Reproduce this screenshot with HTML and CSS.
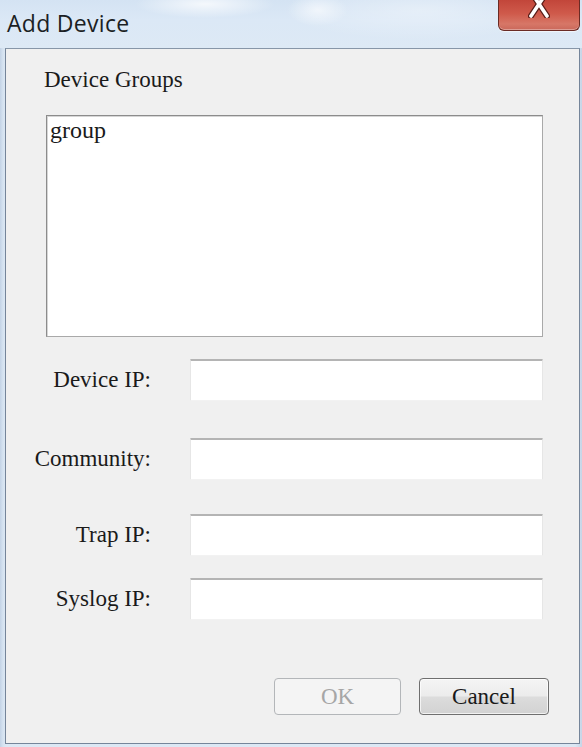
FILE: index.html
```html
<!DOCTYPE html>
<html lang="en">
<head>
<meta charset="utf-8">
<title>Add Device</title>
<link rel="stylesheet" href="styles.css">
</head>
<body>
<div class="window">
  <div class="titlebar">
    <span class="title">Add Device</span>
    <button class="close" type="button" aria-label="Close">
      <svg class="close-x" width="22" height="26" viewBox="0 0 22 26">
        <path d="M3 0 L19 24 M19 0 L3 24" stroke="#5a1d18" stroke-width="6" stroke-linecap="round" fill="none"/>
        <path d="M3 0 L19 24 M19 0 L3 24" stroke="#ffffff" stroke-width="3.6" stroke-linecap="round" fill="none"/>
      </svg>
    </button>
  </div>
  <div class="client">
    <div class="group-label">Device Groups</div>
    <div class="listbox">
      <div class="list-item">group</div>
    </div>
    <div class="row row-ip">
      <label class="field-label" for="ip">Device IP:</label>
      <input class="field" id="ip" type="text">
    </div>
    <div class="row row-community">
      <label class="field-label" for="community">Community:</label>
      <input class="field" id="community" type="text">
    </div>
    <div class="row row-trap">
      <label class="field-label" for="trap">Trap IP:</label>
      <input class="field" id="trap" type="text">
    </div>
    <div class="row row-syslog">
      <label class="field-label" for="syslog">Syslog IP:</label>
      <input class="field" id="syslog" type="text">
    </div>
    <div class="actions">
      <button class="btn btn-disabled" type="button" disabled>OK</button>
      <button class="btn" type="button">Cancel</button>
    </div>
  </div>
</div>
</body>
</html>
```

FILE: styles.css
```css
* {
  box-sizing: border-box;
}

html, body {
  margin: 0;
  padding: 0;
}

body {
  width: 582px;
  height: 747px;
  overflow: hidden;
  background: #d3e0ef;
}

.window {
  width: 582px;
  height: 747px;
  display: flex;
  flex-direction: column;
  background:
    linear-gradient(90deg, #c3d3e6 0, #d6e3f1 3px, #dce8f4 6px, #dce8f4 575px, #c6d5e7 582px);
}

/* glass caption */
.titlebar {
  height: 48px;
  flex: none;
  display: flex;
  align-items: flex-start;
  background:
    radial-gradient(ellipse 70px 14px at 205px 4px, rgba(255,255,255,0.75), rgba(255,255,255,0) 100%),
    radial-gradient(ellipse 30px 16px at 318px 10px, rgba(255,255,255,0.6), rgba(255,255,255,0) 100%),
    radial-gradient(ellipse 140px 30px at 420px 10px, rgba(255,255,255,0.35), rgba(255,255,255,0) 100%),
    linear-gradient(180deg, #d4e3f3 0, #dbe8f6 20px, #dde9f5 48px);
}

.title {
  margin: 8px 0 0 7px;
  font-family: "Open Sans", "Liberation Sans", sans-serif;
  font-size: 23px;
  line-height: 30px;
  color: #1b1f24;
  letter-spacing: 0.3px;
}

.close {
  margin: 0 2px 0 auto;
  width: 82px;
  height: 31px;
  padding: 0;
  position: relative;
  overflow: hidden;
  border: 1px solid #6a2b25;
  border-top: none;
  border-radius: 0 0 6px 6px;
  background: linear-gradient(180deg, #c2463a 0, #cf5a4b 45%, #d77767 80%, #c9685a 100%);
  box-shadow: inset 0 -1px 0 rgba(255,255,255,0.35), 0 1px 1px rgba(255,255,255,0.6);
}

.close-x {
  position: absolute;
  left: 29px;
  top: -8px;
}

/* dialog client area */
.client {
  flex: none;
  height: 696px;
  margin: 0 2px 0 5px;
  background: #f0f0f0;
  border: 1px solid #75859a;
  border-top-color: #8796a8;
  font-family: "Liberation Serif", "DejaVu Serif", serif;
  font-size: 23px;
  color: #1a1a1a;
  display: flex;
  flex-direction: column;
}

.group-label {
  margin: 18px 0 0 38px;
  line-height: 26px;
  height: 26px;
}

.listbox {
  margin: 22px 0 0 40px;
  width: 497px;
  height: 222px;
  background: #ffffff;
  border: 1px solid #a9a9a9;
  border-top-color: #8c8c8c;
  border-left-color: #8c8c8c;
  box-shadow: inset 1px 1px 0 #d6d6d6;
  padding: 1px 0 0 3px;
}

.list-item {
  line-height: 26px;
  font-size: 24px;
}

.row {
  display: flex;
  align-items: center;
  gap: 39px;
}

.row-ip { margin-top: 22px; }
.row-community { margin-top: 37px; }
.row-trap { margin-top: 34px; }
.row-syslog { margin-top: 22px; }

.field-label {
  width: 145px;
  text-align: right;
  line-height: 26px;
  white-space: nowrap;
}

.field {
  width: 353px;
  height: 42px;
  margin: 0;
  padding: 0;
  background: #ffffff;
  border: 1px solid #e6e6e6;
  border-top: 2px solid #b4b4b4;
  border-bottom-color: #f2f2f2;
  border-radius: 1px;
  outline: none;
}

.actions {
  margin: 58px 30px 0 0;
  display: flex;
  justify-content: flex-end;
  gap: 18px;
}

.btn {
  width: 130px;
  height: 37px;
  padding: 0;
  font-family: "Liberation Serif", "DejaVu Serif", serif;
  font-size: 23px;
  color: #1a1a1a;
  border: 1px solid #6f6f6f;
  border-radius: 4px;
  background: linear-gradient(180deg, #f4f4f4 0, #ececec 48%, #dcdcdc 52%, #d2d2d2 100%);
  box-shadow: inset 0 0 0 1px rgba(255,255,255,0.7);
}

.btn-disabled {
  width: 127px;
  color: #a6a6a6;
  border-color: #b3b6b9;
  background: #f4f4f4;
  box-shadow: none;
}
```
